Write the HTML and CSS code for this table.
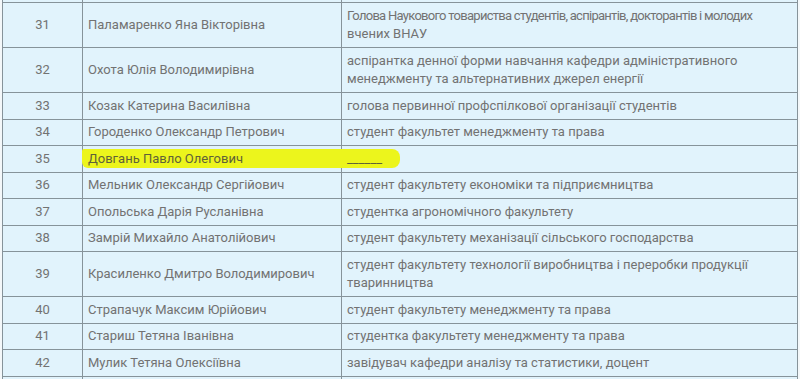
FILE: index.html
```html
<!DOCTYPE html>
<html lang="uk">
<head>
<meta charset="utf-8">
<link rel="stylesheet" href="styles.css">
</head>
<body>
<div class="wrap">
<table class="list">
<colgroup><col class="c-num"><col class="c-name"><col class="c-role"></colgroup>
<tbody>
<tr class="cut"><td></td><td></td><td></td></tr>
<tr><td class="num">31</td><td>Паламаренко Яна Вікторівна</td><td><span class="tight">Голова Наукового товариства студентів, аспірантів, докторантів і молодих</span><br>вчених ВНАУ</td></tr>
<tr><td class="num">32</td><td>Охота Юлія Володимирівна</td><td>аспірантка денної форми навчання кафедри адміністративного менеджменту та альтернативних джерел енергії</td></tr>
<tr><td class="num">33</td><td>Козак Катерина Василівна</td><td>голова первинної профспілкової організації студентів</td></tr>
<tr><td class="num">34</td><td>Городенко Олександр Петрович</td><td>студент факультет менеджменту та права</td></tr>
<tr class="marked"><td class="num">35</td><td class="hl-cell"><span class="marker"></span><span class="over">Довгань Павло Олегович</span></td><td><span class="over">______</span></td></tr>
<tr><td class="num">36</td><td>Мельник Олександр Сергійович</td><td>студент факультету економіки та підприємництва</td></tr>
<tr><td class="num">37</td><td>Опольська Дарія Русланівна</td><td>студентка агрономічного факультету</td></tr>
<tr><td class="num">38</td><td>Замрій Михайло Анатолійович</td><td>студент факультету механізації сільського господарства</td></tr>
<tr><td class="num">39</td><td>Красиленко Дмитро Володимирович</td><td>студент факультету технології виробництва і переробки продукції тваринництва</td></tr>
<tr><td class="num">40</td><td>Страпачук Максим Юрійович</td><td>студент факультету менеджменту та права</td></tr>
<tr><td class="num">41</td><td>Стариш Тетяна Іванівна</td><td>студентка факультету менеджменту та права</td></tr>
<tr><td class="num">42</td><td>Мулик Тетяна Олексіївна</td><td>завідувач кафедри аналізу та статистики, доцент</td></tr>
<tr class="cut"><td></td><td></td><td></td></tr>
</tbody>
</table>
</div>
</body>
</html>
```

FILE: styles.css
```css
html, body {
  margin: 0;
  padding: 0;
  background: #f4f8fa;
}
.wrap {
  padding-left: 2px;
  padding-right: 3px;
  height: 379px;
  overflow: hidden;
}
.list {
  width: 795px;
  border-collapse: collapse;
  table-layout: fixed;
  background: #e1f3fc;
  font-family: Roboto, "Noto Sans", sans-serif;
  font-size: 13px;
  color: #727272;
}
.c-num { width: 80px; }
.c-name { width: 259px; }
.c-role { width: 456px; }
.list td {
  border: 1px solid #86939a;
  padding: 3.5px 5px 3.5px 5px;
  line-height: 18.5px;
  vertical-align: middle;
}
.list td.num { text-align: center; }
.tight {
  white-space: nowrap;
  letter-spacing: -0.72px;
}
.list tr.cut td {
  padding: 0;
  height: 2px;
  line-height: 0;
  border-top: 0;
}
.hl-cell { position: relative; }
.marker {
  position: absolute;
  left: -1px;
  top: 3px;
  width: 318px;
  height: 19px;
  background: #ecf51c;
  border-radius: 2px 8px 8px 6px;
  z-index: 1;
}
.over {
  position: relative;
  z-index: 2;
  color: #5f6238;
}
```
